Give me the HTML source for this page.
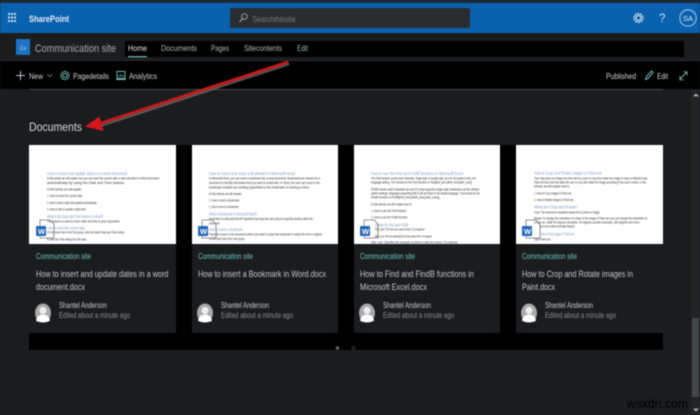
<!DOCTYPE html>
<html><head><meta charset="utf-8"><title>SharePoint</title>
<style>
html,body{margin:0;padding:0;background:#1b1c1e;width:700px;height:415px;overflow:hidden}
svg{display:block;filter:blur(.45px)}
text{font-family:"Liberation Sans",sans-serif;white-space:pre}
.t{font-size:4px;fill:#333}
.h{font-size:4.5px;fill:#7f9cc5}
.site{font-size:8px;fill:#69c4bd}
.title{font-size:9.5px;fill:#c6c6c6}
.name{font-size:8px;fill:#c8c8c8}
.ed{font-size:8px;fill:#8d8d8d}
.nav{font-size:8.5px;fill:#b5b5b5}
.cmd{font-size:8.5px;fill:#d0d0d0}
</style></head><body>
<svg width="700" height="415" viewBox="0 0 700 415" xmlns="http://www.w3.org/2000/svg">
<defs>
<g id="avatar"><ellipse cx="0" cy="0" rx="8" ry="9.5" fill="#a9a9a9"/><circle cx="0" cy="-2.5" r="3.6" fill="#eee"/><path d="M-7 7.5C-6 2.5-3 1.5 0 1.5S6 2.5 7 7.5C4 10 -4 10 -7 7.5Z" fill="#fff"/></g>
<g id="word"><path d="M4 -6H14L18 -2V12H4Z" fill="none" stroke="#777" stroke-width=".8"/><rect x="0" y="0" width="10" height="10" rx=".7" fill="#2368b8"/><text x="2" y="8" style="font-size:7.5px;font-weight:bold;fill:#fff">W</text></g>
</defs>
<rect width="700" height="415" fill="#1b1c1e"/>
<rect width="700" height="3" fill="#1c2a36"/>
<rect y="3" width="700" height="30" fill="#0a61ae"/>
<g fill="#cfe0f0"><rect x="8" y="13" width="2" height="2"/><rect x="11" y="13" width="2" height="2"/><rect x="14" y="13" width="2" height="2"/><rect x="8" y="16.500" width="2" height="2"/><rect x="11" y="16.500" width="2" height="2"/><rect x="14" y="16.500" width="2" height="2"/><rect x="8" y="20" width="2" height="2"/><rect x="11" y="20" width="2" height="2"/><rect x="14" y="20" width="2" height="2"/></g>
<text x="29" y="22" textLength="40" lengthAdjust="spacingAndGlyphs" style="font-size:9px;font-weight:bold;fill:#e4eef7">SharePoint</text>
<rect x="230" y="8" width="240" height="20" rx="1.500" fill="#2a2d2f"/>
<circle cx="244.500" cy="16.500" r="2.800" fill="none" stroke="#aaa" stroke-width=".9"/><path d="M242.500 18.700 239.500 22" stroke="#aaa" stroke-width="1"/>
<text x="252.500" y="22" textLength="43" lengthAdjust="spacingAndGlyphs" style="font-size:8.500px;fill:#777">Searchthissite</text>
<circle cx="638.500" cy="18" r="2.400" fill="none" stroke="#dfe9f2" stroke-width="1.100"/><circle cx="638.500" cy="18" r="4.300" fill="none" stroke="#dfe9f2" stroke-width="1.500" stroke-dasharray="1.800 .9"/>
<text x="659" y="22" style="font-size:11.500px;fill:#cfe0f0">?</text>
<circle cx="688" cy="18" r="8.200" fill="none" stroke="#cfe0f0" stroke-width=".8"/>
<text x="683" y="21" textLength="10" lengthAdjust="spacingAndGlyphs" style="font-size:7.500px;fill:#dfe9f2">SA</text>

<rect x="125" y="41" width="559" height="16" fill="#000"/>
<rect x="16" y="39" width="14" height="16" fill="#1c72c4"/>
<text x="20" y="50" style="font-size:5px;fill:#d5e6f5">Cs</text>
<text x="35" y="52" textLength="81" lengthAdjust="spacingAndGlyphs" style="font-size:11px;fill:#a9a9a9">Communication site</text>
<text class="nav" x="128" y="51" textLength="19" lengthAdjust="spacingAndGlyphs" style="fill:#e0e0e0">Home</text>
<text class="nav" x="161" y="51" textLength="36" lengthAdjust="spacingAndGlyphs">Documents</text>
<text class="nav" x="211" y="51" textLength="18" lengthAdjust="spacingAndGlyphs">Pages</text>
<text class="nav" x="244" y="51" textLength="38" lengthAdjust="spacingAndGlyphs">Sitecontents</text>
<text class="nav" x="297" y="51" textLength="11" lengthAdjust="spacingAndGlyphs" style="fill:#a4b8b8">Edit</text>
<rect x="128" y="56" width="19" height="1.500" fill="#5b9d9c"/>

<rect y="61" width="700" height="28" fill="#000"/>
<rect y="60" width="700" height="1" fill="#2a2b2d"/>
<path d="M16 75.500H25M20.500 71V80" stroke="#b8c8c8" stroke-width="1"/>
<text class="cmd" x="29" y="79" textLength="14" lengthAdjust="spacingAndGlyphs">New</text>
<path d="M47 74l2.700 2.700 2.700-2.700" fill="none" stroke="#777" stroke-width=".8"/>
<circle cx="65" cy="75.500" r="2" fill="none" stroke="#6fc0b8" stroke-width="1"/><circle cx="65" cy="75.500" r="4" fill="none" stroke="#6fc0b8" stroke-width="1.300" stroke-dasharray="1.800 .7"/>
<text class="cmd" x="73" y="79" textLength="36" lengthAdjust="spacingAndGlyphs">Pagedetails</text>
<rect x="117" y="71.500" width="8" height="7" fill="none" stroke="#6fb0b0" stroke-width="1"/><path d="M119 77V75M121 77V74M123 77V75M116 79.500H126" stroke="#6fb0b0" stroke-width=".9"/>
<text class="cmd" x="129" y="79" textLength="28" lengthAdjust="spacingAndGlyphs">Analytics</text>
<text class="cmd" x="606" y="79" textLength="30" lengthAdjust="spacingAndGlyphs">Published</text>
<path d="M645.500 79.500 646.500 76.500 651.500 71 653 72.500 648 78.500Z" fill="none" stroke="#6fb8b0" stroke-width="1"/>
<text class="cmd" x="657" y="79" textLength="11" lengthAdjust="spacingAndGlyphs">Edit</text>
<path d="M679.500 79.500 686.500 72.500M683.500 71.800H687V75.300M680 76V79.800H683.500" fill="none" stroke="#7cb8b0" stroke-width=".9"/>
<rect x="30" y="89" width="633" height="1" fill="#4a4a4a"/>

<text x="29" y="131" textLength="53" lengthAdjust="spacingAndGlyphs" style="font-size:12px;fill:#d8d8d8">Documents</text>

<rect x="29" y="145" width="634" height="205" fill="#000"/>

<!-- Card 1 -->
<rect x="29" y="145" width="147" height="99" fill="#fff"/>
<rect x="29" y="244" width="147" height="89" fill="#1b1c1e"/>
<text class="h" x="47" y="175" textLength="80" lengthAdjust="spacingAndGlyphs">How to insert and update dates in a word document</text>
<text class="t" x="47" y="179.500" textLength="112" lengthAdjust="spacingAndGlyphs">In this article we will explain how you can insert the current date or date and time in a Word document</text>
<text class="t" x="47" y="184" textLength="78" lengthAdjust="spacingAndGlyphs">automatically by using the Date and Time feature.</text>
<text class="t" x="47" y="190.500" textLength="35" lengthAdjust="spacingAndGlyphs">In this tutorial, we will explain:</text>
<text class="t" x="47" y="197" textLength="36" lengthAdjust="spacingAndGlyphs">1. How to insert the current date.</text>
<text class="t" x="47" y="204" textLength="50" lengthAdjust="spacingAndGlyphs">2. How to insert a date that updates automatically.</text>
<text class="t" x="47" y="210.500" textLength="39" lengthAdjust="spacingAndGlyphs">3. How to edit or update a date field.</text>
<text class="h" x="47" y="218" textLength="56" lengthAdjust="spacingAndGlyphs">What is the Date and Time feature in Word?</text>
<text class="t" x="47" y="222.500" textLength="73" lengthAdjust="spacingAndGlyphs">The feature is used to insert date and time in your document.</text>
<text class="h" x="47" y="229.500" textLength="38" lengthAdjust="spacingAndGlyphs">How to insert the current date</text>
<text class="t" x="47" y="233.500" textLength="78" lengthAdjust="spacingAndGlyphs">On the Insert tab in the Text group, click the Insert Date and Time button.</text>
<text class="t" x="47" y="240.500" textLength="40" lengthAdjust="spacingAndGlyphs">A Date and Time dialog box will open.</text>
<use href="#word" x="36" y="226"/>
<text class="site" x="36" y="259" textLength="55" lengthAdjust="spacingAndGlyphs">Communication site</text>
<text class="title" x="36" y="277" textLength="132.500" lengthAdjust="spacingAndGlyphs">How to insert and update dates in a word</text>
<text class="title" x="36" y="290" textLength="49" lengthAdjust="spacingAndGlyphs">document.docx</text>
<use href="#avatar" x="43" y="313"/>
<text class="name" x="59" y="308" textLength="48" lengthAdjust="spacingAndGlyphs">Shantel Anderson</text>
<text class="ed" x="59" y="318" textLength="71" lengthAdjust="spacingAndGlyphs">Edited about a minute ago</text>

<!-- Card 2 -->
<rect x="192" y="145" width="146" height="99" fill="#fff"/>
<rect x="192" y="244" width="146" height="89" fill="#1b1c1e"/>
<text class="h" x="209" y="175" textLength="86" lengthAdjust="spacingAndGlyphs">How to insert and move a Bookmark in Microsoft Word</text>
<text class="t" x="209" y="179.500" textLength="111" lengthAdjust="spacingAndGlyphs">In Microsoft Word, you can insert a bookmark into a word document. Bookmarks are marked for a</text>
<text class="t" x="209" y="184" textLength="111" lengthAdjust="spacingAndGlyphs">document to identify information that you want to revisit later. In Word, the user can move to the</text>
<text class="t" x="209" y="188.500" textLength="101" lengthAdjust="spacingAndGlyphs">bookmark location by creating hyperlinks to the bookmark or moving to them.</text>
<text class="t" x="209" y="195" textLength="33" lengthAdjust="spacingAndGlyphs">In this tutorial, we will explain:</text>
<text class="t" x="209" y="201.500" textLength="31" lengthAdjust="spacingAndGlyphs">1. How to insert a Bookmark.</text>
<text class="t" x="209" y="208" textLength="30" lengthAdjust="spacingAndGlyphs">2. How to move to a Bookmark.</text>
<text class="h" x="209" y="215.500" textLength="48" lengthAdjust="spacingAndGlyphs">What is Bookmark in Microsoft Word?</text>
<text class="t" x="209" y="220" textLength="104" lengthAdjust="spacingAndGlyphs">Bookmark is a Microsoft Word® hyperlink that helps the user jump to a specific location within the</text>
<text class="t" x="209" y="224.500" textLength="11" lengthAdjust="spacingAndGlyphs">document.</text>
<text class="h" x="209" y="231" textLength="34" lengthAdjust="spacingAndGlyphs">How to insert a Bookmark</text>
<text class="t" x="209" y="235.500" textLength="113" lengthAdjust="spacingAndGlyphs">Place the cursor in the document where you want to place the bookmark or select the text or objects</text>
<text class="t" x="209" y="240" textLength="36" lengthAdjust="spacingAndGlyphs">On the Insert tab in the Links group.</text>
<use href="#word" x="198" y="226"/>
<text class="site" x="198" y="259" textLength="55" lengthAdjust="spacingAndGlyphs">Communication site</text>
<text class="title" x="198" y="277" textLength="128" lengthAdjust="spacingAndGlyphs">How to insert a Bookmark in Word.docx</text>
<use href="#avatar" x="205" y="313"/>
<text class="name" x="221" y="308" textLength="48" lengthAdjust="spacingAndGlyphs">Shantel Anderson</text>
<text class="ed" x="221" y="318" textLength="72" lengthAdjust="spacingAndGlyphs">Edited about a minute ago</text>

<!-- Card 3 -->
<rect x="354" y="145" width="146" height="99" fill="#fff"/>
<rect x="354" y="244" width="146" height="89" fill="#1b1c1e"/>
<text class="h" x="371" y="175" textLength="92" lengthAdjust="spacingAndGlyphs">How to use the Find and FindB functions in Microsoft Excel</text>
<text class="t" x="371" y="179.500" textLength="105" lengthAdjust="spacingAndGlyphs">The Find function counts each character, single-byte or double-byte, as one; its syntax is find_text</text>
<text class="t" x="371" y="183.500" textLength="101" lengthAdjust="spacingAndGlyphs">language setting. The formula for the Find function is Find(find_text,within_text,[start_num])</text>
<text class="t" x="371" y="190.500" textLength="108" lengthAdjust="spacingAndGlyphs">FindB counts each character as one if it only supports single-byte characters as the default</text>
<text class="t" x="371" y="194.500" textLength="109" lengthAdjust="spacingAndGlyphs">system settings; languages supporting DBCS will set these to the default language. The formula for the</text>
<text class="t" x="371" y="198.500" textLength="69" lengthAdjust="spacingAndGlyphs">FindB function is FindB(find_text,within_text,[start_num]).</text>
<text class="t" x="371" y="205.500" textLength="41" lengthAdjust="spacingAndGlyphs">In this tutorial, we will explain how to:</text>
<text class="t" x="371" y="212" textLength="36" lengthAdjust="spacingAndGlyphs">1. How to use the Find function.</text>
<text class="t" x="371" y="218.500" textLength="37" lengthAdjust="spacingAndGlyphs">2. How to use the FindB function.</text>
<text class="h" x="375" y="226.500" textLength="33" lengthAdjust="spacingAndGlyphs">Syntax for Find and FindB</text>
<text class="t" x="375" y="230.500" textLength="50" lengthAdjust="spacingAndGlyphs">Find_text: The text you want to find. It is required.</text>
<text class="t" x="375" y="237.500" textLength="57" lengthAdjust="spacingAndGlyphs">Within_text: The text containing the text you want to find. It is required.</text>
<text class="t" x="371" y="243.500" textLength="87" lengthAdjust="spacingAndGlyphs">Start_num: Specifies the character at which to start the search. It is optional.</text>
<rect x="354" y="244" width="146" height="89" fill="#1b1c1e"/>
<use href="#word" x="360" y="226"/>
<text class="site" x="360" y="259" textLength="55" lengthAdjust="spacingAndGlyphs">Communication site</text>
<text class="title" x="360" y="277" textLength="114" lengthAdjust="spacingAndGlyphs">How to Find and FindB functions in</text>
<text class="title" x="360" y="290" textLength="67" lengthAdjust="spacingAndGlyphs">Microsoft Excel.docx</text>
<use href="#avatar" x="367" y="313"/>
<text class="name" x="383" y="308" textLength="48" lengthAdjust="spacingAndGlyphs">Shantel Anderson</text>
<text class="ed" x="383" y="318" textLength="71" lengthAdjust="spacingAndGlyphs">Edited about a minute ago</text>

<!-- Card 4 -->
<rect x="516" y="145" width="147" height="99" fill="#fff"/>
<rect x="516" y="244" width="147" height="89" fill="#1b1c1e"/>
<text class="h" x="534" y="174.500" textLength="68" lengthAdjust="spacingAndGlyphs">How to Crop and Rotate images in Paint.net</text>
<text class="t" x="534" y="179.500" textLength="114" lengthAdjust="spacingAndGlyphs">Your may place an image but there will be a part to crop and rotate the image to have a reflected look.</text>
<text class="t" x="534" y="183.500" textLength="112" lengthAdjust="spacingAndGlyphs">Paint.net has tools that allow the user to crop and rotate the image according to the user's needs. In this</text>
<text class="t" x="534" y="187.500" textLength="36" lengthAdjust="spacingAndGlyphs">tutorial, we will explain how to:</text>
<text class="t" x="534" y="194.500" textLength="38" lengthAdjust="spacingAndGlyphs">1. How to Crop images in Paint.net.</text>
<text class="t" x="534" y="201" textLength="40" lengthAdjust="spacingAndGlyphs">2. How to Rotate images in Paint.net.</text>
<text class="h" x="534" y="208.500" textLength="44" lengthAdjust="spacingAndGlyphs">What are Crop and Rotate?</text>
<text class="t" x="534" y="213.500" textLength="66" lengthAdjust="spacingAndGlyphs">Crop: The removal of unwanted areas from a photo or image.</text>
<text class="t" x="534" y="219.500" textLength="113" lengthAdjust="spacingAndGlyphs">Rotate: To change the orientation of a layer of the image in Paint.net; you can change the orientation of</text>
<text class="t" x="534" y="223.500" textLength="106" lengthAdjust="spacingAndGlyphs">a layer as: rotate 90 degrees clockwise, 90 degrees counter-clockwise, 180 degrees and more.</text>
<text class="t" x="540" y="227.500" textLength="35" lengthAdjust="spacingAndGlyphs">your own numbers and slight degrees.</text>
<text class="h" x="540" y="235.500" textLength="34" lengthAdjust="spacingAndGlyphs">How to Crop images in Paint.net</text>
<text class="t" x="534" y="240.500" textLength="17" lengthAdjust="spacingAndGlyphs">Open Paint.net.</text>
<use href="#word" x="522" y="226"/>
<text class="site" x="522" y="259" textLength="55" lengthAdjust="spacingAndGlyphs">Communication site</text>
<text class="title" x="522" y="277" textLength="111" lengthAdjust="spacingAndGlyphs">How to Crop and Rotate images in</text>
<text class="title" x="522" y="290" textLength="33" lengthAdjust="spacingAndGlyphs">Paint.docx</text>
<use href="#avatar" x="529" y="313"/>
<text class="name" x="545" y="308" textLength="48" lengthAdjust="spacingAndGlyphs">Shantel Anderson</text>
<text class="ed" x="545" y="318" textLength="71" lengthAdjust="spacingAndGlyphs">Edited about a minute ago</text>

<circle cx="337.500" cy="348" r="1.800" fill="#666"/><circle cx="353.500" cy="348" r="1.500" fill="none" stroke="#444" stroke-width=".7"/>

<!-- Scrollbar -->
<rect x="691" y="90" width="9" height="325" fill="#212325"/>
<path d="M694 96.500l2-2 2 2" fill="none" stroke="#eee" stroke-width="1.100"/>
<rect x="692" y="318" width="7" height="79" fill="#414648"/>
<path d="M694 408.500l2 2 2-2" fill="none" stroke="#eee" stroke-width="1.100"/>
<text x="627" y="408" textLength="61" lengthAdjust="spacingAndGlyphs" style="font-size:12.500px;fill:#000">wsxdn.com</text>

<!-- Arrow -->
<path d="M289 63.500 100 125.500" stroke="#666" stroke-width="3.500" opacity=".8"/>
<path d="M288 62 100 123.500" stroke="#c41a1c" stroke-width="3"/>
<path d="M85 126.500 99.500 116.500 103.500 131Z" fill="#d3181b"/>
</svg>
</body></html>
